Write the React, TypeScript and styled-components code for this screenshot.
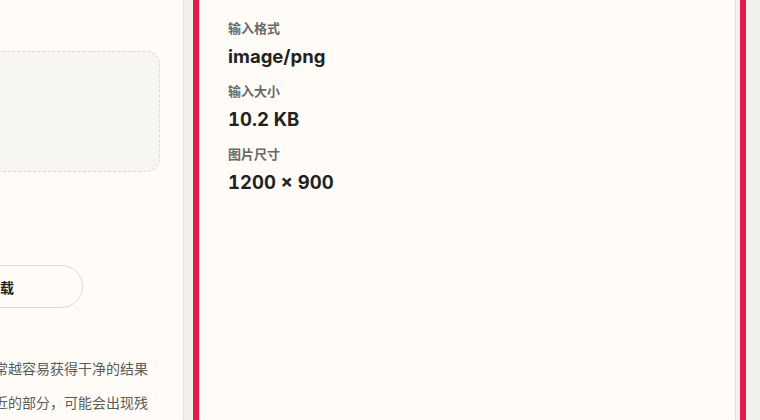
import React from "react";
import styled, { createGlobalStyle } from "styled-components";

const Global = createGlobalStyle`
  html, body {
    margin: 0;
    padding: 0;
    background: #f2f0eb;
    overflow: hidden;
  }
  * { box-sizing: border-box; }
`;

const Page = styled.div`
  display: flex;
  align-items: stretch;
  gap: 9px;
  height: 420px;
  padding-right: 14px;
  overflow: hidden;
  font-family: Inter, "Noto Sans CJK SC", sans-serif;
`;

const dots = `
  background-color: #fffcf8;
  background-image: radial-gradient(rgba(110, 100, 90, 0.03) 0.9px, transparent 1.2px);
  background-size: 8px 8px;
`;

const SidePanel = styled.section`
  flex: none;
  width: 400px;
  margin-left: -216px;
  padding: 51px 23px 0 24px;
  border-right: 1px solid #e3e0d9;
  display: flex;
  flex-direction: column;
  overflow: hidden;
  ${dots}
  & > * { flex-shrink: 0; }
`;

const DropZone = styled.div`
  height: 121px;
  border: 1px dashed #dcd9d3;
  border-radius: 14px;
  background: #f7f6f2;
`;

const ButtonRow = styled.div`
  display: flex;
  gap: 10px;
  margin-top: 93px;
`;

const PillButton = styled.button<{ $w: number }>`
  width: ${(p) => p.$w}px;
  height: 43px;
  border-radius: 22px;
  border: 1px solid #dedad3;
  background: #fffcf8;
  color: #222;
  font-family: "Noto Sans CJK SC", sans-serif;
  font-size: 14px;
  font-weight: 700;
  padding: 0;
`;

const Tips = styled.ul`
  list-style: none;
  margin: 50px 12px 0 0;
  padding: 0;
  width: 280px;
  align-self: flex-end;
  display: flex;
  flex-direction: column;
  gap: 14px;
`;

const Tip = styled.li`
  font-family: "Noto Sans CJK SC", sans-serif;
  font-size: 14px;
  line-height: 20px;
  color: #5b5d5a;
`;

const Highlight = styled.div`
  flex: 1;
  display: flex;
  border-left: 6px solid #e31b4a;
  border-right: 6px solid #e31b4a;
  padding-right: 4px;
`;

const Card = styled.section`
  flex: 1;
  border-left: 1px solid #e6e2da;
  border-right: 1px solid #e2ded6;
  padding: 19px 27px 0 28px;
  display: flex;
  flex-direction: column;
  gap: 13px;
  ${dots}
`;

const Field = styled.div`
  display: flex;
  flex-direction: column;
  gap: 6px;
`;

const Label = styled.div`
  font-family: "Noto Sans CJK SC", sans-serif;
  font-size: 13px;
  line-height: 18px;
  font-weight: 700;
  color: #686b66;
`;

const Value = styled.div`
  font-family: Inter, "Noto Sans CJK SC", sans-serif;
  font-size: 18.5px;
  line-height: 26px;
  font-weight: 700;
  font-feature-settings: "tnum";
  color: #1f2321;
`;

const fields = [
  { label: "输入格式", value: "image/png" },
  { label: "输入大小", value: "10.2 KB" },
  { label: "图片尺寸", value: "1200 × 900" },
];

export default function App() {
  return (
    <>
      <Global />
      <Page>
        <SidePanel>
          <DropZone />
          <ButtonRow>
            <PillButton $w={99}>重置</PillButton>
            <PillButton $w={166}>下载</PillButton>
          </ButtonRow>
          <Tips>
            <Tip>主体边缘清晰时，通常越容易获得干净的结果</Tip>
            <Tip>主体与背景颜色很接近的部分，可能会出现残留</Tip>
          </Tips>
        </SidePanel>
        <Highlight>
          <Card>
            {fields.map((f) => (
              <Field key={f.label}>
                <Label>{f.label}</Label>
                <Value>{f.value}</Value>
              </Field>
            ))}
          </Card>
        </Highlight>
      </Page>
    </>
  );
}
